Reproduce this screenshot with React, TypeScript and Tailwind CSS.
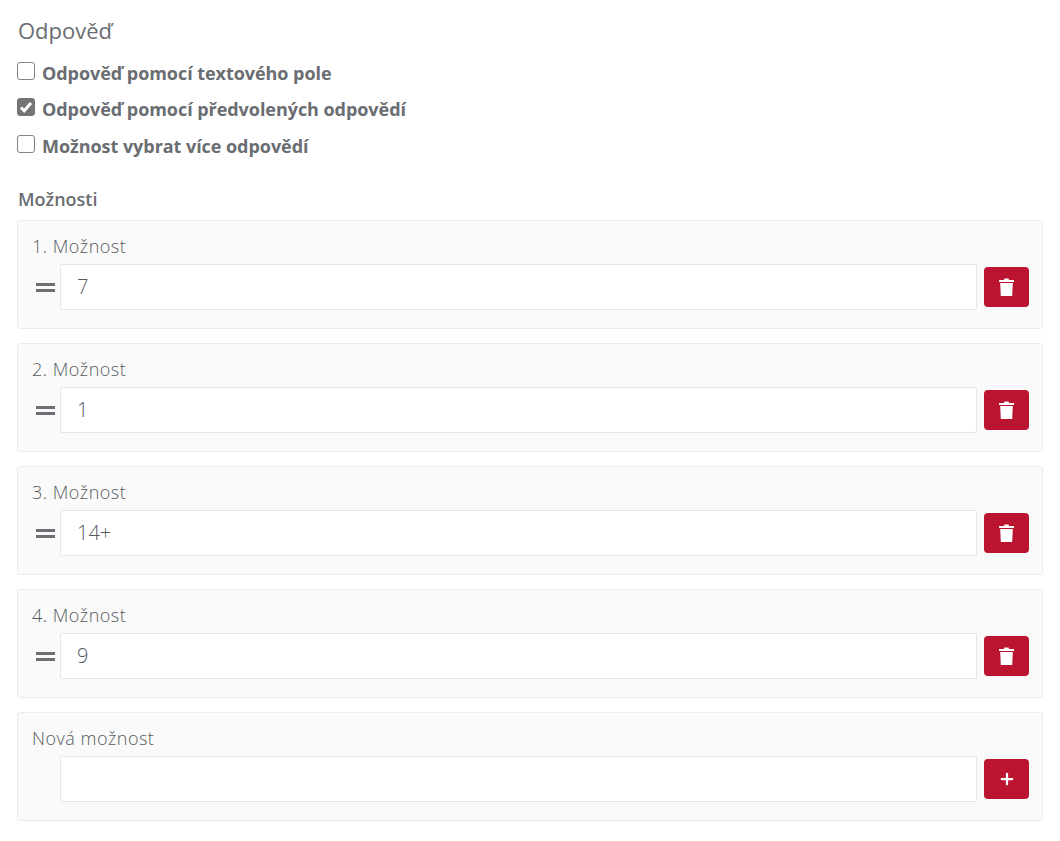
import { Plus } from 'lucide-react';

interface OptionRowProps {
  label: string;
  value?: string;
  isNew?: boolean;
}

const options = [
  { label: '1. Možnost', value: '7' },
  { label: '2. Možnost', value: '1' },
  { label: '3. Možnost', value: '14+' },
  { label: '4. Možnost', value: '9' },
];

function TrashIcon() {
  return (
    <svg width="15" height="18" viewBox="0 0 15 18" fill="#fff">
      <path d="M0 2h5l.4-1.4h4.2L10 2h5v2H0z" />
      <path d="M1.2 5h12.6l-.6 13H1.8z" />
    </svg>
  );
}

function OptionRow({ label, value, isNew }: OptionRowProps) {
  return (
    <div className="rounded-[3px] border border-[#ececec] bg-[#fafafa] pt-[13px] pr-[13px] pb-[18px] pl-[14px]">
      <div className="h-[30px] text-[18px] leading-[24px] font-light tracking-[0.5px] text-[#555a60]">{label}</div>
      <div className="flex items-center">
        <div className="w-[28px] shrink-0">
          {!isNew && (
            <div className="mt-[1px] ml-[4px] flex w-[19px] flex-col gap-[3px]">
              <div className="h-[3px] bg-[#6c6f73]" />
              <div className="h-[3px] bg-[#6c6f73]" />
            </div>
          )}
        </div>
        <input
          readOnly
          value={value ?? ''}
          className="h-[46px] min-w-0 flex-1 rounded-[2px] border border-[#e6e6e6] bg-white px-[16px] text-[20px] font-light text-[#55595e] outline-none"
        />
        <button
          type="button"
          className="ml-[7px] flex h-[40px] w-[45px] shrink-0 items-center justify-center rounded-[4px] bg-[#bb1431]"
        >
          {isNew ? <Plus size={18} strokeWidth={3} color="#fff" /> : <TrashIcon />}
        </button>
      </div>
    </div>
  );
}

function CheckRow({ label, checked }: { label: string; checked?: boolean }) {
  return (
    <label className="flex h-[36.5px] items-center">
      <span
        className={`-mt-[5px] flex h-[18px] w-[18px] items-center justify-center rounded-[3px] border ${
          checked ? 'border-[#757575] bg-[#757575]' : 'border-[#808488] bg-white'
        }`}
      >
        {checked && (
          <svg width="14" height="14" viewBox="0 0 14 14" fill="none" stroke="#fff" strokeWidth="3">
            <path d="M2 7.5l3.2 3.2L12 3" />
          </svg>
        )}
      </span>
      <span className="ml-[7px] text-[18px] font-bold tracking-[-0.05px] text-[#6a6d71]">{label}</span>
    </label>
  );
}

export default function App() {
  return (
    <div className="min-h-[841px] bg-white px-[17px] pt-[15px] font-['Open_Sans',sans-serif]">
      <h2 className="pl-px text-[22px] leading-[30px] font-normal text-[#6a6d71]">Odpověď</h2>

      <div className="mt-[10px] flex flex-col">
        <CheckRow label="Odpověď pomocí textového pole" />
        <CheckRow label="Odpověď pomocí předvolených odpovědí" checked />
        <CheckRow label="Možnost vybrat více odpovědí" />
      </div>

      <div className="mt-[22px] mb-[9px] pl-px text-[18px] leading-[24px] font-semibold text-[#6a6d71]">Možnosti</div>

      <div className="flex flex-col gap-[14px]">
        {options.map((o) => (
          <OptionRow key={o.label} label={o.label} value={o.value} />
        ))}
        <OptionRow label="Nová možnost" isNew />
      </div>
    </div>
  );
}
